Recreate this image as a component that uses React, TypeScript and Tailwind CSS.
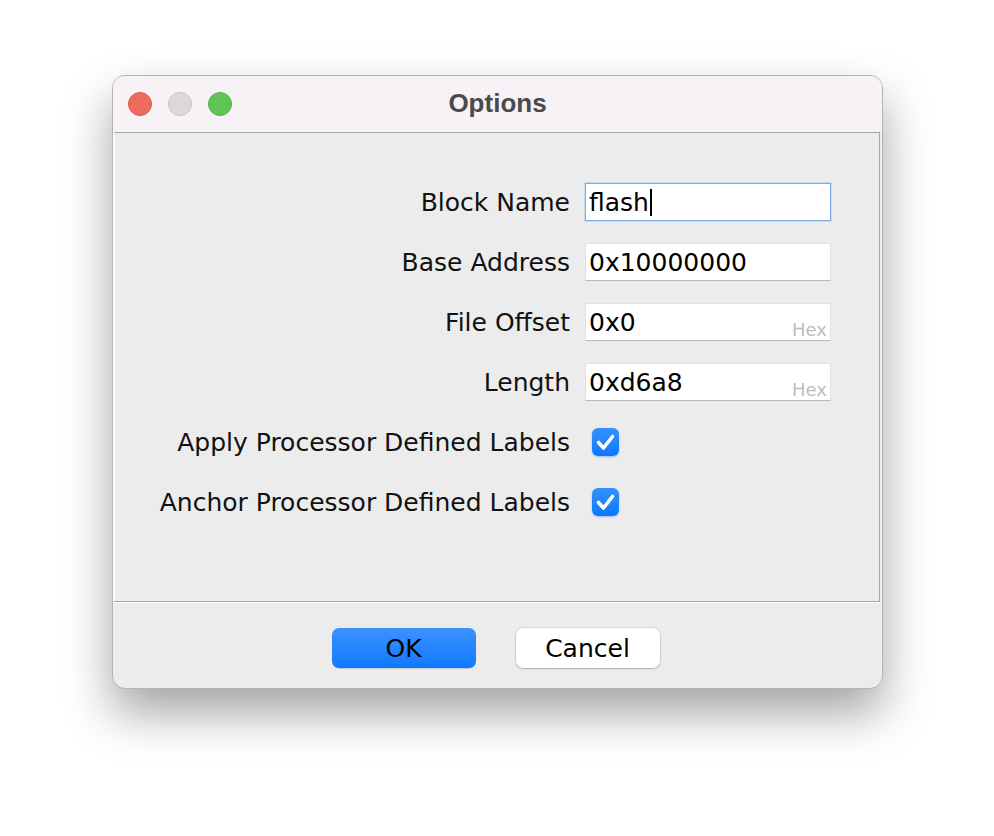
import React from 'react';

const font = { fontFamily: '"DejaVu Sans", "Noto Sans", sans-serif' };

function Field({ value, focused, hint }: { value: string; focused?: boolean; hint?: string }) {
  return (
    <div
      className={
        'relative flex h-[38px] w-[246px] items-center bg-white pl-[3px] ' +
        (focused
          ? 'border border-[#7eaeea] shadow-[0_0_0_1px_#c4dbf6]'
          : 'border border-[#e2e2e2] border-b-[#b9b9b9]')
      }
    >
      <span className="text-[25px] leading-none text-black">{value}</span>
      {focused && <span className="ml-[1px] inline-block h-[27px] w-[2px] bg-black" />}
      {hint && (
        <span className="absolute right-[3px] bottom-[1px] text-[18px] leading-none text-[#bdbdbd]">{hint}</span>
      )}
    </div>
  );
}

function Check() {
  return (
    <div className="flex h-[28px] w-[27px] items-center justify-center rounded-[6px] bg-gradient-to-b from-[#3191ff] to-[#0a78fe] shadow-[0_1px_2px_rgba(0,90,255,0.35)]">
      <svg width="27" height="28" viewBox="0 0 27 28" fill="none">
        <path d="M6.5 14.5l5 5.5L20.5 8.5" stroke="white" strokeWidth="3.6" strokeLinecap="round" strokeLinejoin="round" />
      </svg>
    </div>
  );
}

export default function App() {
  const rows: { label: string; control: React.ReactNode }[] = [
    { label: 'Block Name', control: <Field value="flash" focused /> },
    { label: 'Base Address', control: <Field value="0x10000000" /> },
    { label: 'File Offset', control: <Field value="0x0" hint="Hex" /> },
    { label: 'Length', control: <Field value="0xd6a8" hint="Hex" /> },
    { label: 'Apply Processor Defined Labels', control: <div className="pl-[7px]"><Check /></div> },
    { label: 'Anchor Processor Defined Labels', control: <div className="pl-[7px]"><Check /></div> },
  ];

  return (
    <div className="min-h-[836px] w-[994px] bg-white pt-[75px] pl-[112px]" style={font}>
      <div className="flex h-[614px] w-[771px] flex-col overflow-hidden rounded-[13px] border border-[#b3b3b3] bg-[#ececec] shadow-[0_24px_48px_rgba(0,0,0,0.36)]">
        {/* title bar */}
        <div className="grid h-[56px] grid-cols-[1fr_auto_1fr] items-center bg-[#f6f2f6] pb-[2px]">
          <div className="flex gap-[16px] pl-[15px] pt-[2px]">
            <span className="h-[24px] w-[24px] rounded-full border border-[#d65a4f] bg-[#ee6a5f]" />
            <span className="h-[24px] w-[24px] rounded-full border border-[#c9c5c9] bg-[#dcd8dc]" />
            <span className="h-[24px] w-[24px] rounded-full border border-[#52b447] bg-[#61c555]" />
          </div>
          <div
            className="text-[26px] font-bold text-[#4b4b4b]"
            style={{ fontFamily: '"Liberation Sans", Arial, sans-serif' }}
          >
            Options
          </div>
          <div />
        </div>

        {/* content panel */}
        <div className="mr-[2px] h-[470px] border-t border-r border-b border-t-[#a6a6a6] border-r-[#a6a6a6] border-b-[#a6a6a6] border-l-2 border-l-white pt-[50px]">
          <div className="grid grid-cols-[455px_246px] gap-x-[15px] gap-y-[22px]">
            {rows.map((r) => (
              <React.Fragment key={r.label}>
                <div className="flex h-[38px] items-center justify-end text-[25px] leading-none text-[#111]">
                  {r.label}
                </div>
                <div className="flex h-[38px] items-center">{r.control}</div>
              </React.Fragment>
            ))}
          </div>
        </div>

        {/* buttons */}
        <div className="flex flex-1 justify-center gap-[40px] border-t border-t-white pt-[25px] pr-[4px]">
          <button className="h-[40px] w-[144px] rounded-[7px] bg-gradient-to-b from-[#3a92ff] to-[#0a79ff] text-[25px] leading-none text-black shadow-[0_1px_1px_rgba(0,0,0,0.15)]">
            OK
          </button>
          <button className="h-[40px] w-[144px] rounded-[7px] bg-white text-[25px] leading-none text-black shadow-[0_0_0_0.5px_rgba(0,0,0,0.15),0_1px_2px_rgba(0,0,0,0.2)]">
            Cancel
          </button>
        </div>
      </div>
    </div>
  );
}
